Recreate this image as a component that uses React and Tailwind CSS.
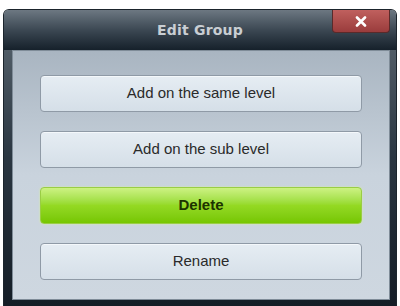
export default function App() {
  const btn =
    "h-[37px] w-full rounded-[4px] border border-[#8f9aa6] bg-gradient-to-b from-[#e6edf3] to-[#d5dfe8] text-[15px] text-[#2a2a2a] shadow-[inset_0_1px_0_#f4f8fb] flex items-center justify-center";
  return (
    <div className="w-[400px] h-[306px] bg-white pt-[10px] pl-[4px]" style={{ fontFamily: '"Liberation Sans", Arial, sans-serif' }}>
      <div className="relative w-[392px] h-[296px] rounded-t-[5px] bg-gradient-to-b from-[#5e6a74] via-[#2a3641] to-[#141d26] flex flex-col shadow-[0_0_0_1px_#1b242c]">
        <div className="h-[40px] flex items-center justify-center bg-gradient-to-b from-[#6d7882] via-[#3c4853] to-[#16212b] rounded-t-[5px]">
          <span className="font-bold text-[#c9ced3] tracking-[0.2px]" style={{ fontFamily: '"DejaVu Sans", sans-serif', fontSize: "14px" }}>Edit Group</span>
        </div>
        <div className="absolute left-[328px] top-0 w-[58px] h-[23px] rounded-b-[4px] border border-[#5a2a2a] border-t-0 bg-gradient-to-b from-[#c0605e] to-[#9a3c3c] flex items-center justify-center">
          <svg width="12" height="11" viewBox="0 0 12 11">
            <path d="M2 1.5 L10 9.5 M10 1.5 L2 9.5" stroke="#fff" strokeWidth="2.6" strokeLinecap="round" />
          </svg>
        </div>
        <div className="mx-[8px] mr-[6px] h-[250px] bg-gradient-to-b from-[#a9b5c1] via-[#c9d3dd] to-[#ced7e0] border border-[#7f8c98] pt-[24px] px-[27px] flex flex-col gap-[19px]">
          <div className={btn}>Add on the same level</div>
          <div className={btn}>Add on the sub level</div>
          <div className="h-[37px] w-full rounded-[4px] border border-[#9acd45] bg-gradient-to-b from-[#cdf282] via-[#94d923] to-[#76c600] text-[15px] font-bold text-[#1c3300] flex items-center justify-center shadow-[0_0_2px_#d9f29a]">Delete</div>
          <div className={btn}>Rename</div>
        </div>
      </div>
    </div>
  );
}
